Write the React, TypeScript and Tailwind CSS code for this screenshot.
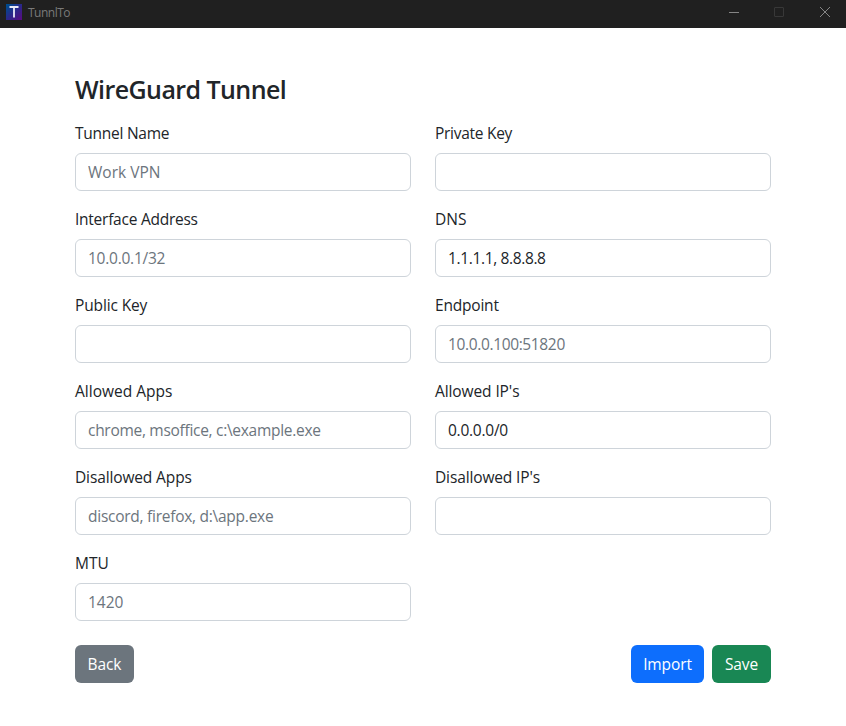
import React from "react";

type FieldProps = {
  label: string;
  labelTracking: string;
  placeholder?: string;
  value?: string;
  textTracking?: string;
};

function Field({ label, labelTracking, placeholder, value, textTracking = "" }: FieldProps) {
  return (
    <label className="flex flex-col gap-2">
      <span className={`h-6 text-[15.5px] leading-[25px] ${labelTracking}`}>{label}</span>
      <input
        type="text"
        placeholder={placeholder}
        defaultValue={value}
        className={`h-[38px] w-full rounded-md border border-[#ced4da] bg-white px-3 text-[15.5px] leading-6 text-[#212529] placeholder:text-[#6c757d] ${textTracking}`}
      />
    </label>
  );
}

const fields: FieldProps[] = [
  { label: "Tunnel Name", labelTracking: "tracking-[-0.25px]", placeholder: "Work VPN", textTracking: "tracking-[0px]" },
  { label: "Private Key", labelTracking: "tracking-[-0.28px]" },
  { label: "Interface Address", labelTracking: "tracking-[-0.25px]", placeholder: "10.0.0.1/32", textTracking: "tracking-[-0.25px]" },
  { label: "DNS", labelTracking: "tracking-[0px]", value: "1.1.1.1, 8.8.8.8", textTracking: "tracking-[-0.36px]" },
  { label: "Public Key", labelTracking: "tracking-[-0.13px]" },
  { label: "Endpoint", labelTracking: "tracking-[-0.2px]", placeholder: "10.0.0.100:51820", textTracking: "tracking-[-0.36px]" },
  { label: "Allowed Apps", labelTracking: "tracking-[0px]", placeholder: "chrome, msoffice, c:\\example.exe", textTracking: "tracking-[-0.29px]" },
  { label: "Allowed IP's", labelTracking: "tracking-[-0.1px]", value: "0.0.0.0/0", textTracking: "tracking-[-0.25px]" },
  { label: "Disallowed Apps", labelTracking: "tracking-[-0.13px]", placeholder: "discord, firefox, d:\\app.exe", textTracking: "tracking-[-0.26px]" },
  { label: "Disallowed IP's", labelTracking: "tracking-[-0.13px]" },
  { label: "MTU", labelTracking: "tracking-[0px]", placeholder: "1420", textTracking: "tracking-[0px]" },
];

function TitleBar() {
  return (
    <header className="flex h-7 items-start justify-between bg-[#202020] pl-1.5">
      <div className="flex items-start gap-1.5 pt-1">
        <svg width="16" height="16" viewBox="0 0 16 16">
          <defs>
            <linearGradient id="logo" x1="0" y1="0" x2="1" y2="1">
              <stop offset="0.1" stopColor="#004a8c" />
              <stop offset="0.5" stopColor="#29288a" />
              <stop offset="1" stopColor="#5b0a80" />
            </linearGradient>
          </defs>
          <rect width="16" height="16" fill="url(#logo)" />
          <path d="M3.5 3h9M8 3v10.5" stroke="#e8eaf6" strokeWidth="1.8" fill="none" />
        </svg>
        <span className="text-[12px] leading-[18px] tracking-[-0.5px] text-[#7a7a7a]">TunnlTo</span>
      </div>
      <div className="flex h-6">
        <svg width="46" height="24" viewBox="0 0 46 24" fill="none" stroke="#858585">
          <path d="M17 12.5h10" />
        </svg>
        <svg width="46" height="24" viewBox="0 0 46 24" fill="none" stroke="#383838">
          <rect x="16.5" y="7.5" width="9" height="9" rx="0.5" />
        </svg>
        <svg width="42" height="24" viewBox="0 0 42 24" fill="none" stroke="#858585">
          <path d="M16 7l10 10M26 7l-10 10" />
        </svg>
      </div>
    </header>
  );
}

export default function App() {
  return (
    <div className="h-[726px] w-[846px] bg-white font-['Open_Sans','Noto_Sans',sans-serif] text-[#212529]">
      <TitleBar />
      <main className="px-[75px] pt-[46px]">
        <h3 className="mb-4 h-[31px] text-[25px] leading-[31px] font-semibold tracking-[-0.57px]">
          <span>WireGuard Tunnel</span>
        </h3>
        <form className="grid grid-cols-2 gap-x-6 gap-y-4">
          {fields.map((f) => (
            <Field key={f.label} {...f} />
          ))}
        </form>
        <div className="mt-6 flex justify-between text-[15.5px] leading-6 tracking-[-0.1px] text-white">
          <button type="button" className="h-[38px] w-[59px] rounded-md bg-[#6c757d]">Back</button>
          <div className="flex gap-2">
            <button type="button" className="h-[38px] w-[73px] rounded-md bg-[#0d6efd]">Import</button>
            <button type="button" className="h-[38px] w-[59px] rounded-md bg-[#198754]">Save</button>
          </div>
        </div>
      </main>
    </div>
  );
}
